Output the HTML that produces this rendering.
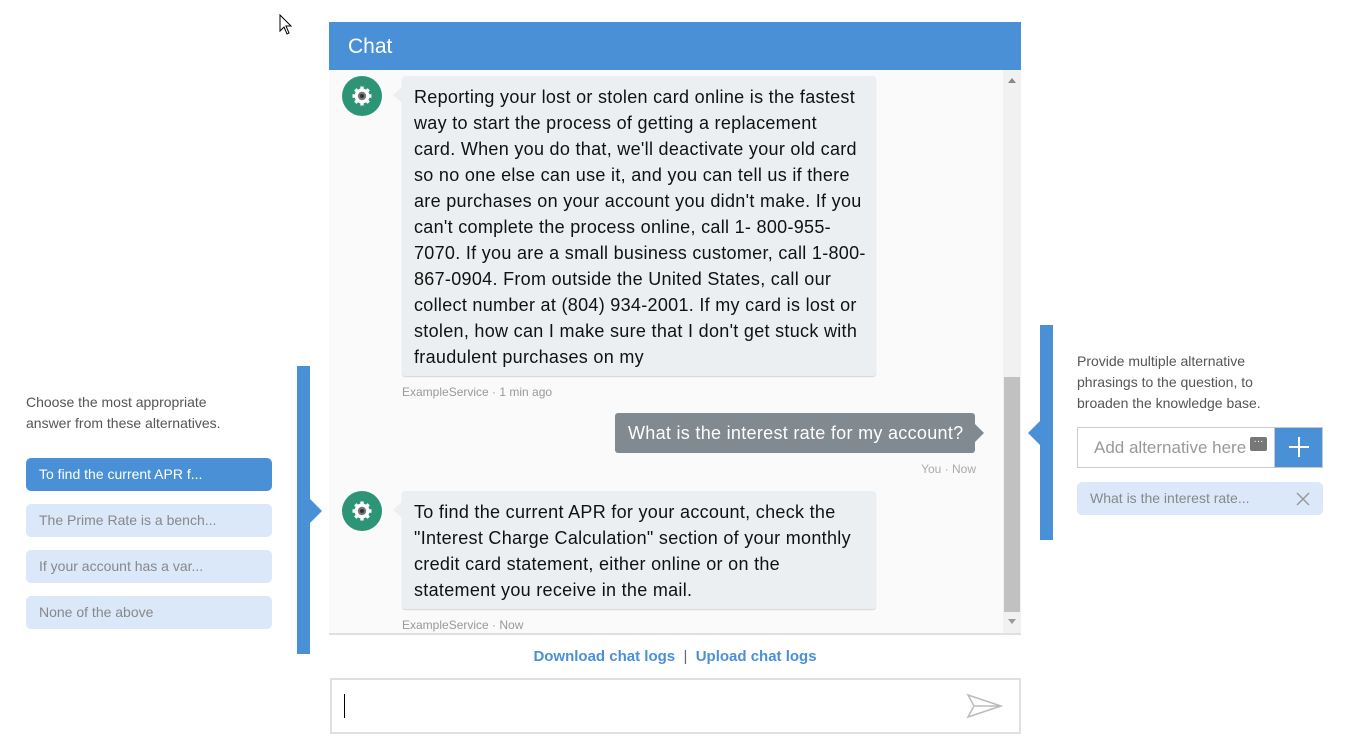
<!DOCTYPE html>
<html><head><style>
*{box-sizing:border-box;margin:0;padding:0}
body{width:1350px;height:750px;background:#fff;font-family:"Liberation Sans",sans-serif;position:relative;overflow:hidden}
.a{position:absolute}
.msg{font-size:18px;letter-spacing:0.3px;color:#111;line-height:26px;white-space:nowrap}
.meta{font-size:12px;color:#999}
.av{width:40px;height:40px;border-radius:50%;background:#2e9476}
.bub{background:#eceff1;border-radius:3px;box-shadow:0 1px 1px rgba(0,0,0,.15)}
.opt{left:26px;width:246px;height:33px;border-radius:5px;background:#dae8fa;color:#888;font-size:14px;line-height:33px;padding-left:13px}
</style></head><body>
<svg class="a" style="left:279px;top:14px" width="14" height="22"><path d="M1 1 L1 17 L5 13 L8 20 L10 19 L7 12 L12 12 Z" fill="#fff" stroke="#000" stroke-width="1"/></svg>

<div class="a" style="left:329px;top:22px;width:692px;height:48px;background:#4a90d6;color:#fff;font-size:21px;line-height:50px;padding-left:19px">Chat</div>
<div class="a" style="left:329px;top:70px;width:692px;height:564px;background:#fafafa"></div>
<div class="a" style="left:1003px;top:70px;width:18px;height:563px;background:#f1f1f1"></div>
<div class="a" style="left:1004px;top:377px;width:16px;height:235px;background:#c1c1c1"></div>
<svg class="a" style="left:1007px;top:77px" width="10" height="8"><path d="M1 6 L5 1 L9 6Z" fill="#888"/></svg>
<svg class="a" style="left:1007px;top:618px" width="10" height="8"><path d="M1 1 L5 6 L9 1Z" fill="#999"/></svg>

<div class="a av" style="left:342px;top:76px"></div>
<svg class="a" style="left:350px;top:84px" width="24" height="24" viewBox="0 0 24 24"><g fill="#fff"><circle cx="12" cy="12" r="7.5"/><g stroke="#fff" stroke-width="3.4"><line x1="12" y1="2.5" x2="12" y2="21.5"/><line x1="2.5" y1="12" x2="21.5" y2="12"/><line x1="5.3" y1="5.3" x2="18.7" y2="18.7"/><line x1="18.7" y1="5.3" x2="5.3" y2="18.7"/></g></g><circle cx="12" cy="12" r="4.2" fill="#777"/><circle cx="12" cy="12" r="2" fill="#333"/></svg>
<div class="a bub" style="left:402px;top:76px;width:474px;height:300px"></div>
<svg class="a" style="left:392px;top:86px" width="11" height="18"><path d="M11 0 L1 9 L11 18Z" fill="#eceff1"/></svg>
<div class="a msg" style="left:414px;top:84px">Reporting your lost or stolen card online is the fastest<br>way to start the process of getting a replacement<br>card. When you do that, we'll deactivate your old card<br>so no one else can use it, and you can tell us if there<br>are purchases on your account you didn't make. If you<br>can't complete the process online, call 1- 800-955-<br>7070. If you are a small business customer, call 1-800-<br>867-0904. From outside the United States, call our<br>collect number at (804) 934-2001. If my card is lost or<br>stolen, how can I make sure that I don't get stuck with<br>fraudulent purchases on my</div>
<div class="a meta" style="left:402px;top:385px">ExampleService · 1 min ago</div>

<div class="a" style="left:615px;top:413px;width:360px;height:40px;background:#818a91;border-radius:3px;color:#fff;font-size:18px;letter-spacing:0.3px;line-height:40px;padding-left:13px;white-space:nowrap">What is the interest rate for my account?</div>
<svg class="a" style="left:974px;top:423px" width="11" height="20"><path d="M0 0 L10 10 L0 20Z" fill="#818a91"/></svg>
<div class="a meta" style="left:900px;top:462px;width:76px;text-align:right;color:#aaa">You · Now</div>

<div class="a av" style="left:342px;top:491px"></div>
<svg class="a" style="left:350px;top:499px" width="24" height="24" viewBox="0 0 24 24"><g fill="#fff"><circle cx="12" cy="12" r="7.5"/><g stroke="#fff" stroke-width="3.4"><line x1="12" y1="2.5" x2="12" y2="21.5"/><line x1="2.5" y1="12" x2="21.5" y2="12"/><line x1="5.3" y1="5.3" x2="18.7" y2="18.7"/><line x1="18.7" y1="5.3" x2="5.3" y2="18.7"/></g></g><circle cx="12" cy="12" r="4.2" fill="#777"/><circle cx="12" cy="12" r="2" fill="#333"/></svg>
<div class="a bub" style="left:402px;top:491px;width:474px;height:118px"></div>
<svg class="a" style="left:392px;top:501px" width="11" height="18"><path d="M11 0 L1 9 L11 18Z" fill="#eceff1"/></svg>
<div class="a msg" style="left:414px;top:499px">To find the current APR for your account, check the<br>"Interest Charge Calculation" section of your monthly<br>credit card statement, either online or on the<br>statement you receive in the mail.</div>
<div class="a meta" style="left:402px;top:618px">ExampleService · Now</div>

<div class="a" style="left:329px;top:633px;width:692px;height:2px;background:#dde1e5"></div>
<div class="a" style="left:329px;top:648px;width:692px;text-align:center;font-size:15px;color:#4a90d6;font-weight:bold;white-space:nowrap">Download chat logs &nbsp;<span style="color:#666;font-weight:normal">|</span>&nbsp; Upload chat logs</div>
<div class="a" style="left:330px;top:678px;width:691px;height:56px;border:2px solid #dde1e5;background:#fff"></div>
<div class="a" style="left:344px;top:694px;width:1px;height:24px;background:#000"></div>
<svg class="a" style="left:966px;top:693px" width="38" height="26"><path d="M2 2 L35 13 L2 24 L8 13 Z M8 13 L35 13" fill="none" stroke="#bbb" stroke-width="1.5"/></svg>

<div class="a" style="left:26px;top:392px;font-size:14px;color:#555;line-height:21px">Choose the most appropriate<br>answer from these alternatives.</div>
<div class="a opt" style="top:458px;background:#4a90d6;color:#fff">To find the current APR f...</div>
<div class="a opt" style="top:504px">The Prime Rate is a bench...</div>
<div class="a opt" style="top:550px">If your account has a var...</div>
<div class="a opt" style="top:596px">None of the above</div>
<div class="a" style="left:297px;top:366px;width:13px;height:288px;background:#4a90d6"></div>
<svg class="a" style="left:309px;top:498px" width="14" height="26"><path d="M0 0 L13 13 L0 26Z" fill="#4a90d6"/></svg>

<div class="a" style="left:1040px;top:325px;width:13px;height:215px;background:#4a90d6"></div>
<svg class="a" style="left:1028px;top:420px" width="13" height="26"><path d="M13 0 L0 13 L13 26Z" fill="#4a90d6"/></svg>
<div class="a" style="left:1077px;top:351px;font-size:14px;color:#555;line-height:21px">Provide multiple alternative<br>phrasings to the question, to<br>broaden the knowledge base.</div>
<div class="a" style="left:1077px;top:427px;width:198px;height:41px;border:1px solid #ccc;background:#fff;font-size:17px;color:#999;line-height:40px;padding-left:16px;white-space:nowrap;overflow:hidden">Add alternative here</div>
<div class="a" style="left:1250px;top:437px;width:17px;height:14px;background:#777;border-radius:2px;color:#fff;font-size:10px;line-height:9px;text-align:center">···</div>
<div class="a" style="left:1274px;top:427px;width:49px;height:41px;background:#4a90d6;border:1px solid #c8c8c8"></div>
<svg class="a" style="left:1288px;top:436px" width="22" height="22"><path d="M11 1 V21 M1 11 H21" stroke="#fff" stroke-width="2"/></svg>
<div class="a" style="left:1077px;top:482px;width:246px;height:33px;border-radius:5px;background:#dae8fa;color:#888;font-size:14px;line-height:33px;padding-left:13px">What is the interest rate...</div>
<svg class="a" style="left:1296px;top:492px" width="14" height="14"><path d="M1 1 L13 13 M13 1 L1 13" stroke="#999" stroke-width="1.5"/></svg>
</body></html>
